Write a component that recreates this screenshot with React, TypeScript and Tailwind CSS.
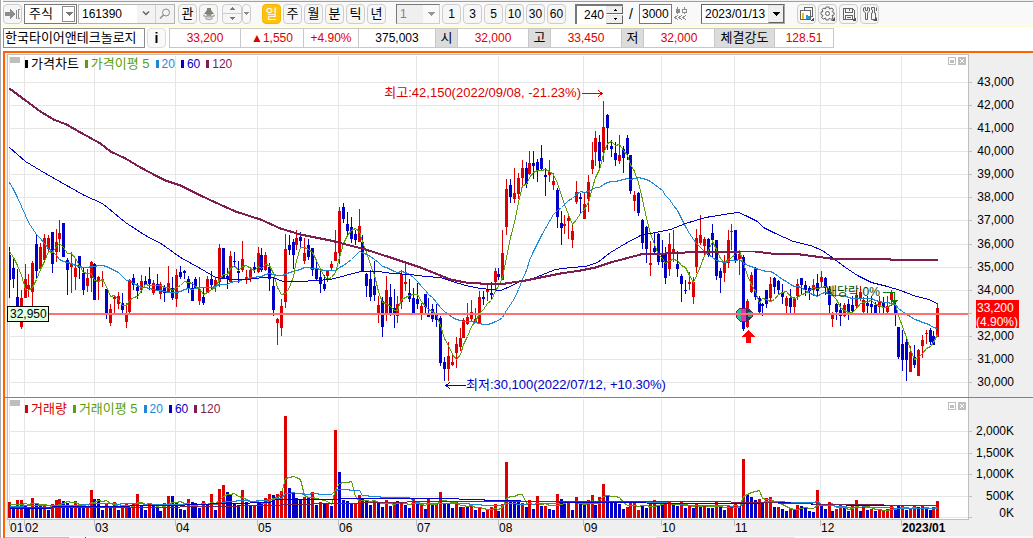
import { useState } from "react";
import type { ReactNode } from "react";

// [direction, high, body top, body bottom, low], one per trading day
type Candle = [number, number, number, number, number];
type Point = [number, number];

const U = 1;
const D = -1;

const CANDLES: Candle[] = [
    [D, 247, 255, 280, 298], [D, 258, 268, 279, 288], [D, 269, 297, 310, 318], [U, 290, 298, 327, 329],
    [U, 264, 279, 298, 298], [U, 274, 285, 289, 297], [U, 261, 263, 292, 310], [D, 235, 244, 271, 279],
    [U, 243, 247, 269, 271], [U, 234, 238, 260, 262], [U, 235, 238, 249, 252], [D, 232, 232, 264, 273],
    [U, 229, 242, 252, 262], [U, 220, 233, 239, 252], [D, 223, 223, 257, 257], [D, 258, 260, 270, 295],
    [U, 252, 263, 267, 293], [U, 259, 268, 277, 290], [D, 256, 256, 268, 279], [D, 267, 273, 290, 295],
    [U, 269, 278, 286, 292], [U, 261, 262, 278, 292], [D, 263, 264, 300, 300], [U, 276, 277, 281, 300],
    [U, 271, 279, 281, 287], [D, 289, 289, 313, 319], [U, 304, 309, 323, 326], [U, 296, 297, 299, 313],
    [U, 292, 296, 304, 309], [D, 293, 303, 310, 313], [U, 303, 315, 322, 328], [U, 279, 280, 312, 313],
    [D, 274, 278, 285, 290], [D, 283, 287, 291, 299], [U, 275, 281, 290, 293], [D, 276, 281, 285, 285],
    [D, 267, 279, 284, 290], [U, 280, 283, 293, 295], [D, 274, 284, 290, 291], [U, 282, 284, 294, 299],
    [D, 285, 287, 293, 302], [U, 266, 283, 292, 293], [D, 277, 288, 298, 300], [U, 269, 275, 299, 307],
    [D, 266, 272, 277, 279], [D, 270, 271, 273, 279], [D, 276, 279, 289, 293], [D, 282, 288, 301, 301],
    [D, 277, 279, 288, 289], [U, 277, 289, 301, 305], [D, 287, 297, 303, 305], [U, 276, 279, 293, 293],
    [D, 271, 279, 285, 290], [U, 277, 280, 286, 292], [U, 244, 248, 282, 287], [D, 248, 248, 279, 279],
    [D, 268, 276, 279, 289], [U, 251, 256, 282, 283], [D, 252, 261, 262, 267], [D, 261, 271, 273, 283],
    [U, 241, 259, 270, 272], [U, 270, 277, 279, 284], [U, 267, 270, 277, 282], [D, 262, 267, 270, 273],
    [U, 247, 253, 272, 273], [D, 248, 255, 270, 272], [U, 252, 255, 270, 271], [D, 263, 267, 279, 291],
    [D, 278, 286, 310, 316], [U, 318, 319, 323, 345], [U, 299, 306, 328, 336], [U, 234, 249, 302, 308],
    [D, 235, 245, 250, 255], [D, 239, 242, 255, 269], [U, 230, 238, 245, 250], [D, 232, 237, 241, 247],
    [U, 238, 253, 261, 264], [D, 239, 245, 257, 260], [D, 248, 248, 270, 276], [D, 261, 269, 279, 280],
    [D, 270, 277, 284, 293], [D, 275, 284, 289, 291], [U, 270, 271, 276, 282], [U, 261, 264, 268, 270],
    [U, 230, 252, 261, 261], [U, 207, 211, 253, 264], [D, 203, 207, 219, 223], [D, 212, 224, 231, 235],
    [D, 217, 227, 239, 243], [D, 230, 234, 240, 245], [U, 209, 226, 242, 242], [D, 235, 242, 271, 272],
    [D, 273, 274, 286, 297], [D, 270, 279, 297, 301], [D, 261, 286, 295, 301], [U, 296, 305, 314, 323],
    [D, 297, 301, 327, 337], [U, 276, 290, 314, 321], [D, 284, 297, 313, 316], [D, 289, 308, 314, 328],
    [U, 296, 304, 316, 323], [U, 270, 274, 302, 309], [U, 263, 282, 284, 291], [D, 279, 293, 299, 302],
    [D, 288, 298, 313, 314], [D, 283, 299, 304, 309], [U, 303, 306, 314, 320], [D, 294, 294, 307, 313],
    [D, 298, 313, 317, 317], [D, 304, 309, 319, 322], [D, 304, 314, 320, 327], [D, 316, 318, 363, 366],
    [D, 357, 362, 369, 381], [U, 342, 356, 369, 381], [U, 353, 362, 365, 366], [U, 337, 344, 353, 368],
    [U, 328, 338, 347, 351], [U, 318, 320, 338, 338], [U, 303, 317, 324, 325], [U, 300, 312, 319, 321],
    [U, 308, 319, 322, 323], [U, 291, 297, 323, 324], [D, 291, 297, 299, 305], [U, 285, 289, 292, 301],
    [D, 282, 293, 295, 300], [U, 268, 271, 282, 292], [D, 268, 274, 277, 280], [U, 230, 253, 280, 280],
    [U, 179, 189, 227, 235], [D, 179, 185, 197, 203], [U, 168, 193, 199, 203], [U, 173, 178, 194, 199],
    [U, 160, 168, 178, 186], [D, 162, 168, 184, 188], [U, 151, 163, 174, 175], [D, 151, 163, 166, 179],
    [D, 159, 162, 170, 182], [D, 145, 158, 169, 170], [D, 168, 175, 177, 196], [U, 160, 172, 175, 182],
    [U, 173, 181, 185, 190], [D, 188, 190, 217, 228], [D, 211, 223, 228, 245], [U, 215, 224, 226, 234],
    [U, 215, 218, 221, 239], [U, 224, 231, 240, 248], [U, 181, 192, 202, 204], [D, 193, 197, 199, 213],
    [U, 193, 204, 219, 219], [U, 175, 182, 199, 212], [U, 142, 160, 169, 174], [U, 131, 138, 152, 166],
    [D, 135, 142, 161, 168], [U, 101, 127, 152, 162], [D, 114, 115, 128, 150], [D, 140, 146, 149, 157],
    [D, 142, 153, 160, 166], [U, 135, 155, 161, 164], [D, 146, 149, 158, 173], [D, 135, 138, 154, 160],
    [D, 155, 155, 191, 194], [U, 191, 195, 201, 211], [D, 192, 193, 213, 216], [D, 219, 220, 243, 249],
    [D, 226, 227, 249, 263], [U, 241, 263, 265, 276], [D, 232, 248, 252, 253], [D, 233, 234, 262, 265],
    [D, 240, 253, 262, 268], [D, 247, 253, 278, 284], [U, 233, 244, 269, 276], [U, 230, 249, 252, 262],
    [D, 251, 264, 269, 277], [D, 274, 276, 284, 302], [D, 280, 290, 291, 294], [U, 272, 282, 284, 290],
    [U, 277, 282, 297, 304], [U, 229, 238, 267, 273], [U, 215, 235, 243, 245], [U, 237, 239, 246, 255],
    [D, 238, 239, 255, 257], [D, 224, 233, 240, 257], [D, 240, 240, 276, 280], [D, 268, 271, 278, 293],
    [U, 255, 262, 273, 282], [U, 230, 240, 263, 268], [U, 224, 231, 232, 250], [D, 230, 230, 261, 263],
    [U, 250, 254, 259, 275], [D, 255, 257, 329, 331], [U, 299, 301, 327, 328], [U, 272, 275, 292, 293],
    [D, 267, 268, 297, 300], [D, 296, 298, 312, 314], [D, 303, 304, 306, 316], [D, 290, 290, 304, 308],
    [U, 277, 284, 298, 301], [D, 277, 278, 287, 294], [D, 280, 281, 290, 294], [D, 284, 293, 297, 304],
    [U, 296, 298, 306, 314], [D, 289, 298, 307, 314], [U, 297, 298, 307, 314], [U, 279, 284, 296, 300],
    [D, 278, 278, 285, 294], [D, 281, 285, 290, 296], [D, 286, 288, 291, 300], [U, 279, 285, 290, 296],
    [D, 274, 283, 291, 297], [U, 271, 277, 282, 288], [D, 277, 278, 288, 295], [D, 286, 289, 305, 314],
    [U, 312, 314, 319, 327], [D, 303, 304, 312, 320], [D, 303, 310, 316, 326], [U, 303, 305, 316, 317],
    [D, 299, 304, 314, 320], [D, 296, 305, 311, 314], [U, 290, 295, 306, 309], [U, 286, 292, 298, 301],
    [U, 297, 300, 312, 314], [D, 296, 303, 306, 313], [D, 296, 304, 307, 314], [D, 302, 305, 313, 314],
    [U, 296, 301, 307, 314], [D, 297, 303, 307, 314], [U, 296, 306, 312, 314], [U, 290, 293, 300, 306],
    [D, 300, 305, 314, 326], [D, 327, 327, 357, 359], [D, 330, 344, 360, 371], [D, 337, 342, 360, 381],
    [U, 346, 352, 372, 372], [D, 345, 357, 365, 368], [U, 349, 350, 376, 376], [U, 335, 340, 346, 358],
    [U, 330, 333, 334, 344], [D, 328, 330, 342, 345], [D, 331, 336, 345, 345], [U, 303, 308, 337, 337],
];

// Bar heights. Negative means a falling day (blue)
const VOLUMES: number[] = [
    16, -11, 18, 18, -12, -9, 20, -15, -12, 12, -8, 14, 18, 19, -17, -15, -10, 17, -12, -11,
    12, 28, -19, -19, -8, 15, -12, 16, -8, 13, 15, -11, 15, 24, -13, -8, 15, -12, -12, -7,
    15, 22, -22, -15, -9, -8, 19, -16, -15, -10, 17, -14, 24, -8, 29, 33, -26, -23, -15, -13,
    28, -16, -12, 13, -16, -16, 20, 24, -23, 24, 27, 102, -30, -25, -20, -19, 21, -20, 26, -13,
    16, -14, 14, -12, 88, -46, -18, -17, -14, 15, 23, -19, -17, -13, 17, -15, -11, 18, -12, 16,
    -17, 16, -13, -10, 20, -14, 13, -9, 20, -14, 15, 26, -14, -15, -10, 17, -11, 11, -12, 13,
    -8, 10, -6, 8, 11, 14, -7, 14, 56, -17, -17, -16, 15, -11, 18, -9, 22, -12, 12, -9,
    -8, 24, -19, -17, 15, -8, 21, -15, -13, 18, 23, -13, 21, 34, -23, -17, -15, -14, -9, 11,
    16, 17, 8, -12, -10, 14, 18, -13, -13, 15, 17, -13, -12, 16, -10, 13, -10, 14, -13, 13,
    -10, -10, 16, -11, -8, 12, 11, 14, -12, 59, -24, -21, -18, 19, -16, 20, 21, -11, 11, -9,
    -7, 10, -8, 13, -12, -11, -7, -6, 28, -13, -9, 16, -7, 9, 14, -10, -7, 12, 18, -7,
    14, -8, 9, -7, 8, 8, 9, 12, -10, -13, 12, -8, 9, 12, -11, 12, -9, -8, 11, 17,
];

const PRICE_MA60: Point[] = [
    [9, 147], [25, 161], [45, 173], [68, 186], [84, 195], [102, 203], [125, 222], [145, 235], [162, 244],
    [180, 257], [200, 268], [215, 277], [230, 279], [247, 279], [262, 277], [272, 277], [283, 281],
    [300, 281], [330, 279], [345, 275], [360, 271], [378, 271], [392, 273], [410, 274], [425, 276],
    [440, 277], [452, 281], [465, 285], [480, 288], [500, 290], [505, 288], [520, 281], [535, 277],
    [555, 269], [570, 267], [585, 266], [597, 262], [610, 252], [625, 243], [640, 235], [655, 232],
    [670, 229], [685, 223], [705, 217], [730, 213], [738, 212], [745, 215], [757, 221], [763, 227],
    [775, 233], [793, 241], [810, 245], [822, 250], [833, 258], [845, 267], [857, 275], [871, 282],
    [887, 286], [900, 290], [913, 295], [928, 299], [937, 303],
];

const PRICE_MA120: Point[] = [
    [9, 88], [25, 100], [40, 111], [53, 119], [66, 124], [80, 132], [100, 143], [110, 151], [125, 158],
    [140, 167], [155, 175], [165, 180], [180, 185], [200, 195], [215, 202], [235, 211], [260, 219],
    [280, 228], [300, 234], [330, 240], [365, 249], [390, 257], [420, 267], [440, 275], [450, 279],
    [465, 282], [480, 283], [505, 283], [525, 280], [545, 276], [560, 273], [580, 270], [595, 267],
    [610, 262], [625, 258], [640, 254], [665, 253], [685, 252], [740, 251], [755, 251], [770, 253],
    [800, 254], [815, 256], [830, 258], [870, 258], [890, 259], [937, 259],
];

const VOLUME_MA60: Point[] = [
    [9, 508], [50, 508], [52, 506], [80, 506], [180, 505], [190, 504], [270, 502], [275, 499], [337, 499],
    [345, 498], [457, 498], [460, 499], [483, 499], [485, 500], [515, 500], [525, 501], [590, 502],
    [700, 503], [740, 503], [780, 502], [820, 504], [870, 505], [937, 505],
];

const VOLUME_MA120: Point[] = [
    [9, 507], [150, 507], [270, 505], [290, 504], [337, 503], [430, 501], [600, 501], [700, 501],
    [760, 502], [830, 504], [937, 505],
];

const MONTHS = [
    { x: 9, label: "01" }, { x: 24, label: "02" }, { x: 94, label: "03" }, { x: 175, label: "04" },
    { x: 257, label: "05" }, { x: 338, label: "06" }, { x: 416, label: "07" }, { x: 498, label: "08" },
    { x: 583, label: "09" }, { x: 661, label: "10" }, { x: 734, label: "11" }, { x: 820, label: "12" },
    { x: 901, label: "2023/01" },
];

const PRICE_TICKS = [
    { y: 82, label: "43,000" }, { y: 105, label: "42,000" }, { y: 128, label: "41,000" },
    { y: 151, label: "40,000" }, { y: 174, label: "39,000" }, { y: 197, label: "38,000" },
    { y: 220, label: "37,000" }, { y: 244, label: "36,000" }, { y: 267, label: "35,000" },
    { y: 290, label: "34,000" }, { y: 313, label: "" }, { y: 336, label: "32,000" },
    { y: 359, label: "31,000" }, { y: 382, label: "30,000" },
];

const VOLUME_TICKS = [
    { y: 431, label: "2,000K" }, { y: 453, label: "1,500K" }, { y: 474, label: "1,000K" },
    { y: 496, label: "500K" }, { y: 517, label: "0K" },
];

const UP = "#dc0000";
const DOWN = "#0000c8";
const GREEN = "#5aa00a";
const SKY = "#1e87d7";
const PLUM = "#7d1e50";

const BASE = 518;
const xAt = (i: number) => Math.round(9 + i * 3.884);

const toPoints = (points: Point[]) => points.map(([x, y]) => `${x + 0.5},${y + 0.5}`).join(" ");

// Simple moving average, `head` holds the values before the window is full
const average = (values: number[], size: number, head: number[]): number[] =>
    values.map((_, i) => {
        if (i < size - 1) return head[Math.min(i, head.length - 1)];
        return values.slice(i - size + 1, i + 1).reduce((a, b) => a + b, 0) / size;
    });

const series = (values: number[]): Point[] => values.map((v, i) => [xAt(i), Math.round(v)]);

const closes = CANDLES.map(([dir, , top, bottom]) => (dir === U ? top : bottom));
const priceMa5 = series(average(closes, 5, [251, 257, 265, 275]));
const priceMa20 = series(
    average(closes, 20, [182, 189, 197, 206, 215, 222, 228, 234, 238, 243, 248, 251, 255, 259, 261, 262, 263, 265, 266])
);
const volumeTops = VOLUMES.map((v) => BASE - Math.abs(v));
const volumeMa5 = series(average(volumeTops, 5, [504]));
const volumeMa20 = series(average(volumeTops, 20, [506, 506, 506, 506, 505]));

function Line({ points, color, width = 1 }: { points: Point[]; color: string; width?: number }) {
    return <polyline points={toPoints(points)} fill="none" stroke={color} strokeWidth={width} />;
}

function PriceChart() {
    return (
        <svg
            viewBox="5 53 1028 345"
            className="block w-full font-['Liberation_Sans','Noto_Sans_CJK_KR',sans-serif]"
            shapeRendering="crispEdges"
            role="img"
            aria-label="가격차트"
        >
            <rect x="5" y="53" width="1028" height="345" fill="#efefef" />
            <rect x="7" y="54" width="962" height="343" fill="#bebebe" />
            <rect x="8" y="55" width="960" height="342" fill="#fff" />

            {/* Grid */}
            {MONTHS.map((m) => (
                <rect key={m.x} x={m.x} y="56" width="1" height="339" fill="#e6e6e6" />
            ))}
            {PRICE_TICKS.map((t) => (
                <g key={t.y}>
                    <rect x="9" y={t.y} width="959" height="1" fill="#e6e6e6" />
                    <rect x="969" y={t.y} width="3" height="1" fill="#bebebe" />
                    <text x="1014" y={t.y + 4} textAnchor="end" fontSize="12">
                        {t.label}
                    </text>
                </g>
            ))}

            {CANDLES.map(([dir, high, top, bottom, low], i) => (
                <g key={i} fill={dir === U ? UP : DOWN}>
                    <rect x={xAt(i)} y={high} width="1" height={low - high} />
                    <rect x={xAt(i) - 1} y={top} width="3" height={Math.max(1, bottom - top)} />
                </g>
            ))}
            <rect x="8" y="56" width="1" height="339" fill="#fff" />

            <Line points={priceMa5} color={GREEN} />
            <Line points={priceMa20} color={SKY} />
            <Line points={PRICE_MA60} color={DOWN} />
            <Line points={PRICE_MA120} color={PLUM} width={2} />

            {/* High / low notes */}
            <g stroke={UP} fill="none">
                <path d="M582 93.500H602M598 90L602 93.500L598 97" />
            </g>
            <text x="581" y="97" textAnchor="end" fontSize="13" fill={UP}>
                최고:42,150(2022/09/08, -21.23%)
            </text>
            <g stroke={DOWN} fill="none">
                <path d="M446 385.500H466M450 382L446 385.500L450 389" />
            </g>
            <text x="466" y="389" fontSize="13" fill={DOWN}>
                최저:30,100(2022/07/12, +10.30%)
            </text>

            {/* Ex-dividend note */}
            <text x="826" y="296" fontSize="12" fill="#004600">
                배당락:0%
            </text>
            <path d="M883 292.500H894.500V300" fill="none" stroke="#008200" />
            <path d="M891 300H898L894.500 304Z" fill="#008200" />

            {/* Trade marker */}
            <path d="M740 308H748L752 312V317L748 321H740L736 317V312Z" fill="#1ec896" />
            <rect x="741" y="308" width="5" height="13" fill="#e632b4" />
            <path d="M746 308H748L752 312V317L748 321H746Z" fill="#32325a" />
            <path d="M748 312H752V317H748Z" fill="#1ea08c" />
            <path d="M740 308H748L752 312V317L748 321H740L736 317V312Z" fill="none" stroke="#7d1e50" />
            <rect x="8" y="313" width="960" height="2" fill="#ff7070" />
            <path d="M748.500 330L755 337H751V343H746V337H742Z" fill="#ff0000" />

            <rect x="7" y="306" width="42" height="16" fill="#000" />
            <rect x="8" y="307" width="40" height="14" fill="#e1ffe1" />
            <text x="10" y="318" fontSize="12">
                32,950
            </text>

            <rect x="976" y="300" width="43" height="28" fill="#ff0000" />
            <text x="977" y="312" fontSize="12" fill="#fff">
                33,200
            </text>
            <text x="976" y="326" fontSize="12" fill="#fff">
                (4.90%)
            </text>
            <rect x="5" y="397" width="1028" height="1" fill="#828282" />
        </svg>
    );
}

function VolumeChart() {
    return (
        <svg
            viewBox="5 398 1028 140"
            className="block w-full font-['Liberation_Sans','Noto_Sans_CJK_KR',sans-serif]"
            shapeRendering="crispEdges"
            role="img"
            aria-label="거래량"
        >
            <rect x="5" y="398" width="1028" height="140" fill="#efefef" />
            <rect x="7" y="398" width="962" height="122" fill="#bebebe" />
            <rect x="8" y="398" width="960" height="121" fill="#fff" />

            {MONTHS.map((m) => (
                <g key={m.x}>
                    <rect x={m.x} y="399" width="1" height="119" fill="#e6e6e6" />
                    <rect x={m.x} y="520" width="1" height="6" fill="#bebebe" />
                    <text
                        x={m.x + 1}
                        y="532"
                        fontSize="12"
                        fontWeight={m.label.length > 2 ? 700 : 400}
                    >
                        {m.label}
                    </text>
                </g>
            ))}
            {VOLUME_TICKS.map((t) => (
                <g key={t.y}>
                    <rect x="9" y={t.y} width="959" height="1" fill="#e6e6e6" />
                    <rect x="969" y={t.y} width="3" height="1" fill="#bebebe" />
                    <text x="1014" y={t.label === "0K" ? 517 : t.y + 4} textAnchor="end" fontSize="12">
                        {t.label}
                    </text>
                </g>
            ))}

            {VOLUMES.map((v, i) => (
                <rect
                    key={i}
                    x={xAt(i) - 1}
                    y={BASE - Math.abs(v)}
                    width="3"
                    height={Math.abs(v)}
                    fill={v > 0 ? UP : DOWN}
                />
            ))}

            <Line points={volumeMa5} color={GREEN} />
            <Line points={volumeMa20} color={SKY} />
            <Line points={VOLUME_MA60} color={DOWN} />
            <Line points={VOLUME_MA120} color={PLUM} />

            {/* Scroll bar edge */}
            <rect x="5" y="536" width="1028" height="2" fill="#f8f8f8" />
            <rect x="5" y="537" width="64" height="1" fill="#bebebe" />
            <rect x="85" y="537" width="1" height="1" fill="#505050" />
            <rect x="656" y="537" width="138" height="1" fill="#dcdcdc" />
        </svg>
    );
}

const LEGEND_COLORS = [GREEN, SKY, DOWN, PLUM];

function Legend({ title, titleColor, average: name }: { title: string; titleColor: string; average: string }) {
    const items = [title, `${name} 5`, "20", "60", "120"];
    const colors = [titleColor, ...LEGEND_COLORS];

    return (
        <div className="absolute left-5 top-[3px] flex h-4 items-center gap-1.5 whitespace-nowrap leading-4">
            {items.map((item, i) => (
                <span key={item} className="flex items-center gap-[3px]" style={{ color: colors[i] }}>
                    <i className="h-2 w-[3px] bg-current" />
                    <span className={i < 2 ? "text-[13px]" : "text-xs"}>{item}</span>
                </span>
            ))}
        </div>
    );
}

function PanelButtons() {
    return (
        <div className="absolute right-[67px] top-1 flex gap-0.5">
            <button aria-label="최대화" className="flex size-2 items-center justify-center border border-[#bebebe] bg-white">
                <i className="h-[3px] w-1 bg-[#bebebe]" />
            </button>
            <button aria-label="닫기" className="size-2 bg-[#bebebe]">
                <svg viewBox="0 0 8 8" className="size-2">
                    <path d="M2 2L6 6M6 2L2 6" stroke="#fff" />
                </svg>
            </button>
        </div>
    );
}

function ToolButton({
    children,
    label,
    active,
    onClick,
}: {
    children: ReactNode;
    label?: string;
    active?: boolean;
    onClick?: () => void;
}) {
    return (
        <button
            aria-label={label}
            onClick={onClick}
            className={`flex h-5 w-[19px] shrink-0 items-center justify-center rounded border ${
                active ? "border-[#f5b400] bg-[#ffc30f] text-white" : "border-[#cdcdcd] bg-[#f6f6f6]"
            }`}
        >
            {children}
        </button>
    );
}

function Caret({ className = "h-1 w-2" }: { className?: string }) {
    return (
        <svg viewBox="0 0 8 4" className={className} shapeRendering="crispEdges">
            <path d="M0 0H8L4 4Z" fill="currentColor" />
        </svg>
    );
}

const PERIODS = ["일", "주", "월", "분", "틱", "년"];
const MINUTES = ["1", "3", "5", "10", "30", "60"];

function Toolbar() {
    const [period, setPeriod] = useState("일");
    const [count, setCount] = useState(240);

    return (
        <div className="flex h-[25px] items-center border-b border-[#fffccf] bg-[#f9f9f9] pb-px">
            <ToolButton label="이동">
                <svg viewBox="0 0 16 12" className="h-3 w-4" shapeRendering="crispEdges">
                    <path d="M0 4H5V1L10 6L5 11V8H0Z" fill="#8c8c8c" />
                    <path d="M11.500 1.500V10.500M13.500 1.500V10.500M13 1.500H15M13 10.500H15" stroke="#8c8c8c" fill="none" />
                </svg>
            </ToolButton>

            <div className="relative ml-0.5 shrink-0">
                <select
                    aria-label="종목구분"
                    className="block h-5 w-[53px] appearance-none border border-[#787878] bg-white pl-1 text-[13px] leading-4"
                >
                    <option>주식</option>
                </select>
                <span className="pointer-events-none absolute right-0.5 top-0.5 flex h-4 w-[13px] items-center justify-center border border-[#8c8c8c] bg-white text-[#787878]">
                    <Caret />
                </span>
            </div>

            <div className="ml-px flex h-5 w-[97px] shrink-0 border border-[#b4b4b4] bg-white">
                <input aria-label="종목코드" defaultValue="161390" className="w-[58px] pl-[3px] text-xs outline-none" />
                <button aria-label="종목목록" className="flex w-[18px] items-center justify-center bg-[#f3f3f3]">
                    <svg viewBox="0 0 8 5" className="h-[5px] w-2">
                        <path d="M1 0.500L4 3.500L7 0.500" stroke="#646464" strokeWidth="1.500" fill="none" />
                    </svg>
                </button>
                <button aria-label="검색" className="flex w-[19px] items-center justify-center border-l border-[#d2d2d2] bg-[#f3f3f3]">
                    <svg viewBox="0 0 12 12" className="size-3" fill="none" stroke="#8c8c8c">
                        <circle cx="7" cy="4.500" r="3.500" />
                        <path d="M4.500 7L1 10.500" strokeWidth="1.500" />
                    </svg>
                </button>
            </div>

            <div className="ml-[3px] flex gap-0.5">
                <ToolButton>관</ToolButton>
                <ToolButton label="종목정보">
                    <svg viewBox="0 0 14 14" className="size-3.5">
                        <path d="M5 1H9V3L12 7H2L5 3Z" fill="#82827a" />
                        <path d="M1.500 8C3 10.500 11 10.500 12.500 8M3.500 11C5 13 9 13 10.500 11" fill="none" stroke="#aaaaa5" strokeWidth="1.500" />
                        <path d="M4 7H10L9 9H5Z" fill="#96968f" />
                    </svg>
                </ToolButton>
            </div>

            <div className="ml-1 flex h-5 shrink-0">
                <div className="flex w-5 flex-col rounded border border-[#cdcdcd] bg-[#f6f6f6] text-[#787878]">
                    <button aria-label="이전종목" className="flex flex-1 items-center justify-center border-b border-[#cdcdcd]">
                        <Caret className="h-[3px] w-1.5 rotate-180" />
                    </button>
                    <button aria-label="다음종목" className="flex flex-1 items-center justify-center">
                        <Caret className="h-[3px] w-1.5" />
                    </button>
                </div>
                <button aria-label="종목순서" className="flex w-[9px] items-center justify-center rounded border border-[#cdcdcd] text-[#8c8c8c]">
                    <Caret className="h-[3px] w-[5px]" />
                </button>
            </div>

            <div className="ml-[11px] flex gap-0.5 text-[13px]">
                {PERIODS.map((p) => (
                    <ToolButton key={p} active={p === period} onClick={() => setPeriod(p)}>
                        {p}
                    </ToolButton>
                ))}
            </div>

            <div className="relative ml-2.5 shrink-0">
                <select
                    aria-label="주기"
                    disabled
                    className="block h-5 w-11 appearance-none border border-[#cdcdcd] border-l-[#787878] border-t-[#787878] bg-[#efefef] pl-[3px] text-xs text-[#828282] opacity-100"
                >
                    <option>1</option>
                </select>
                <span className="pointer-events-none absolute right-px top-px flex h-[18px] w-4 items-center justify-center bg-[#f9f9f9] text-[#969696]">
                    <Caret />
                </span>
            </div>

            <div className="ml-0.5 flex gap-0.5 text-xs">
                {MINUTES.map((m) => (
                    <ToolButton key={m}>{m}</ToolButton>
                ))}
            </div>

            <div className="ml-[9px] flex h-5 w-12 shrink-0 border-l-2 border-t-2 border-[#787878] bg-white">
                <input
                    aria-label="조회갯수"
                    value={count}
                    onChange={(e) => setCount(Number(e.target.value) || 0)}
                    className="w-[29px] pr-0.5 text-right text-xs outline-none"
                />
                <div className="flex flex-1 flex-col gap-px">
                    <button
                        aria-label="증가"
                        onClick={() => setCount(count + 1)}
                        className="flex flex-1 items-center justify-center border border-[#e6e6e6] border-b-[#646464] border-r-[#646464] bg-[#efefef]"
                    >
                        <Caret className="h-0.5 w-1 rotate-180" />
                    </button>
                    <button
                        aria-label="감소"
                        onClick={() => setCount(count - 1)}
                        className="flex flex-1 items-center justify-center border border-[#e6e6e6] border-b-[#646464] border-r-[#646464] bg-[#efefef]"
                    >
                        <Caret className="h-0.5 w-1" />
                    </button>
                </div>
            </div>
            <span className="w-4 shrink-0 text-center text-sm">/</span>
            <input
                aria-label="전체갯수"
                defaultValue="3000"
                className="h-5 w-[33px] shrink-0 border border-[#787878] bg-white pl-0.5 text-xs outline-none"
            />
            <button aria-label="연속조회" className="flex h-5 w-[18px] shrink-0 items-center justify-center">
                <svg viewBox="0 0 14 14" className="size-3.5" fill="none" stroke="#8c8c8c" shapeRendering="crispEdges">
                    <path d="M3.500 0V7M10.500 0V2M10.500 5V7" />
                    <rect x="2" y="2" width="3" height="3" fill="#8c8c8c" />
                    <rect x="8.500" y="2.500" width="4" height="3" />
                    <path d="M4 8L1 10.500L4 13M8 8L5 10.500L8 13M12 8L9 10.500L12 13" />
                </svg>
            </button>

            <div className="relative ml-[11px] shrink-0">
                <select
                    aria-label="기준일"
                    className="block h-5 w-[84px] appearance-none border border-[#aaaaaa] border-l-[#646464] border-t-[#646464] bg-white pl-[3px] text-xs"
                >
                    <option>2023/01/13</option>
                </select>
                <span className="pointer-events-none absolute right-px top-px flex h-[18px] w-4 items-center justify-center border border-[#e6e6e6] border-b-[#646464] border-r-[#646464] bg-[#efefef]">
                    <Caret />
                </span>
            </div>

            <div className="ml-3 flex gap-0.5">
                <ToolButton label="차트형태">
                    <svg viewBox="0 0 16 16" className="size-4 shrink-0" fill="none" stroke="#646464" shapeRendering="crispEdges">
                        <path d="M5.500 4V1.500H13.500V10.500H12" />
                        <rect x="1.500" y="4.500" width="10" height="9" fill="#fff" />
                        <path d="M4 7V13" stroke="#ffb400" strokeWidth="2" />
                        <path d="M7.500 9V13M9.500 10V13" stroke="#1e9bd7" strokeWidth="2" />
                        <path d="M15 11V15H11Z" fill="#505050" stroke="none" />
                    </svg>
                </ToolButton>
                <ToolButton label="환경설정">
                    <svg viewBox="0 0 16 16" className="size-4 shrink-0" fill="none" stroke="#646464">
                        <circle cx="7.500" cy="7.500" r="2" />
                        <path d="M6 1H9L9.500 3L12 2L13.500 4L12 5.500L14 6.500V9L12 9.500L13 12L11 13.500L9.500 12L8.500 14H6L5.500 12L3.500 13L1.500 11.500L3 9.500L1 8.500V6L3 5.500L2 3.500L4 2L5.500 3Z" />
                        <path d="M15 11V15H11Z" fill="#505050" stroke="none" />
                    </svg>
                </ToolButton>
                <ToolButton label="저장">
                    <svg viewBox="0 0 16 16" className="size-4 shrink-0" fill="none" stroke="#646464" shapeRendering="crispEdges">
                        <path d="M2.500 2.500H11.500L13.500 4.500V13.500H2.500Z" />
                        <path d="M4.500 2.500V6.500H11.500V2.500M8.500 3V5M4.500 13.500V9.500H11.500V13.500M6 11.500H10" />
                        <path d="M15 11V15H11Z" fill="#505050" stroke="none" />
                    </svg>
                </ToolButton>
                <ToolButton label="도구">
                    <svg viewBox="0 0 16 16" className="size-4 shrink-0" fill="none" stroke="#646464">
                        <path d="M1.500 2V5L3.500 7V13.500H5.500V7L7.500 5V2L5.500 1.500V4.500H3.500V1.500Z" />
                        <path d="M9.500 1.500H12.500V7H13.500V13.500H9.500V7H10.500V4L9.500 3.500ZM14.500 1.500V5" />
                        <path d="M15 11V15H11Z" fill="#505050" stroke="none" />
                    </svg>
                </ToolButton>
            </div>
        </div>
    );
}

function QuoteRow() {
    return (
        <div className="flex h-6 items-start pt-px">
            <div className="flex h-5 shrink-0 items-center border border-[#8c8c8c] bg-white px-px">
                <span className="w-[138px] whitespace-nowrap text-[13px] leading-4">한국타이어앤테크놀로지</span>
            </div>
            <button
                aria-label="종목정보"
                className="ml-0.5 flex h-5 w-[19px] shrink-0 items-center justify-center rounded border border-[#dcdcdc] bg-[#f9f9f9] text-sm font-bold"
            >
                i
            </button>
            <table className="ml-[3px] h-5 table-fixed border-collapse text-center text-xs [&_td]:border [&_td]:border-[#c8c8c8] [&_td]:bg-white [&_td]:p-0 [&_td]:leading-4 [&_th]:border [&_th]:border-[#c8c8c8] [&_th]:bg-[#dcdcdc] [&_th]:p-0 [&_th]:text-[13px] [&_th]:font-normal [&_th]:leading-4">
                <tbody className="text-[#dc0000]">
                    <tr>
                        <td className="w-[71px]">33,200</td>
                        <td className="w-[63px]">▲1,550</td>
                        <td className="w-[55px]">+4.90%</td>
                        <td className="w-[77px] text-black">375,003</td>
                        <th className="w-[22px] text-black">시</th>
                        <td className="w-[71px]">32,000</td>
                        <th className="w-[22px] text-black">고</th>
                        <td className="w-[71px]">33,450</td>
                        <th className="w-[22px] text-black">저</th>
                        <td className="w-[71px]">32,000</td>
                        <th className="w-[60px] text-black">체결강도</th>
                        <td className="w-[59px]">128.51</td>
                    </tr>
                </tbody>
            </table>
        </div>
    );
}

export default function App() {
    return (
        <div className="min-h-screen overflow-hidden border-l border-[#aaaaaa] bg-white pl-0.5 font-['Liberation_Sans','Noto_Sans_CJK_KR',sans-serif] text-[13px] text-black">
            <div className="h-px bg-[#f0f0f0]" />
            <div className="h-px bg-[#a0a0a0]" />
            <Toolbar />
            <QuoteRow />

            <main className="border-l-2 border-t-2 border-[#ff6400]">
                <section className="relative">
                    <PriceChart />
                    <i className="absolute left-[5px] top-1 h-1.5 w-2.5 bg-[#bebebe]" />
                    <Legend title="가격차트" titleColor="#000" average="가격이평" />
                    <PanelButtons />
                </section>
                <section className="relative">
                    <VolumeChart />
                    <i className="absolute left-[5px] top-0.5 h-1.5 w-2.5 bg-[#bebebe]" />
                    <Legend title="거래량" titleColor={UP} average="거래이평" />
                    <PanelButtons />
                </section>
            </main>
        </div>
    );
}
